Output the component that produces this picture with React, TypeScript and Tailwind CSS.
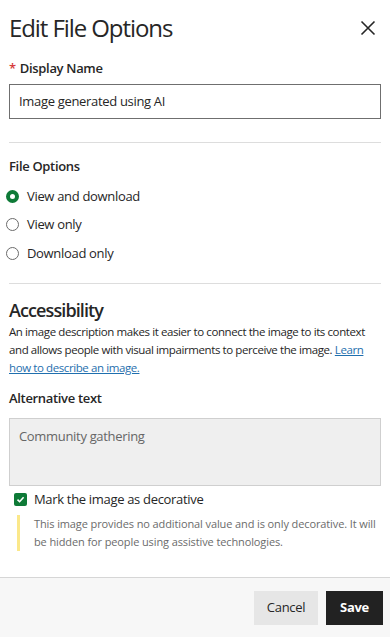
import React from 'react';

const options = ['View and download', 'View only', 'Download only'];

export default function App() {
  return (
    <div
      className="w-[390px] h-[637px] bg-white flex flex-col text-[#262626] tracking-[-0.02em]"
      style={{ fontFamily: '"Open Sans", "Noto Sans", sans-serif' }}
    >
      <div className="flex-1 px-[9px]">
        {/* header */}
        <div className="h-[56px] flex items-center justify-between">
          <h1 className="text-[24px] leading-[32px] font-normal tracking-[-0.045em]">Edit File Options</h1>
          <button className="w-[20px] h-[20px] mr-[3px] flex items-center justify-center" aria-label="Close">
            <svg width="16" height="16" viewBox="0 0 16 16">
              <path d="M1.5 1.5 L14.5 14.5 M14.5 1.5 L1.5 14.5" stroke="#262626" strokeWidth="1.6" fill="none" />
            </svg>
          </button>
        </div>

        <label className="block mt-[3px] text-[13px] leading-[18px] font-semibold tracking-[-0.025em]">
          <span className="text-[#d63a3a] mr-[4px]">*</span>Display Name
        </label>
        <div className="mt-[7px] h-[35px] border border-[#6f6f6f] flex items-center pl-[9px] text-[13px]">
          Image generated using AI
        </div>

        <div className="mt-[23px] h-px bg-[#dddddd]" />

        <div className="mt-[14px] text-[13px] leading-[18px] font-semibold tracking-[-0.025em]">File Options</div>
        <div className="mt-[7px] flex flex-col -ml-[3px]">
          {options.map((o, i) => (
            <div key={o} className="h-[28.5px] flex items-center gap-[8px] text-[13px]">
              {i === 0 ? (
                <span className="w-[13px] h-[13px] rounded-full border-[4px] border-[#0e7a37] bg-white" />
              ) : (
                <span className="w-[13px] h-[13px] rounded-full border border-[#6b6b6b] bg-white" />
              )}
              <span>{o}</span>
            </div>
          ))}
        </div>

        <div className="mt-[15px] h-px bg-[#dddddd]" />

        <h2 className="mt-[15px] text-[18px] leading-[22px] font-semibold tracking-[-0.05em]">Accessibility</h2>
        <p className="mt-[2px] text-[11.5px] leading-[18px] tracking-[-0.035em]">
          An image description makes it easier to connect the image to its context and allows people with visual
          impairments to perceive the image.{' '}
          <a className="text-[#1f6fae] underline">Learn how to describe an image.</a>
        </p>

        <div className="mt-[12px] text-[13px] leading-[18px] font-semibold tracking-[-0.025em]">Alternative text</div>
        <div className="mt-[11px] h-[68px] bg-[#efefef] border border-[#cfcfcf] pl-[9px] pt-[8px] text-[13px] leading-[18px] text-[#666666]">
          Community gathering
        </div>

        <div className="mt-[5px] h-[18px] flex items-center pl-[5px] gap-[7px] text-[13px]">
          <span className="w-[13px] h-[13px] rounded-[2px] bg-[#0e7a37] flex items-center justify-center">
            <svg width="9" height="9" viewBox="0 0 9 9">
              <path d="M1.5 4.6 L3.6 6.7 L7.6 2.2" stroke="white" strokeWidth="1.6" fill="none" />
            </svg>
          </span>
          <span>Mark the image as decorative</span>
        </div>

        <div className="mt-[6px] ml-[8px] border-l-[3px] border-[#fbe88a] pl-[14px] text-[11px] leading-[18px] text-[#6b6b6b] tracking-[-0.01em]">
          This image provides no additional value and is only decorative. It will be hidden for people using
          assistive technologies.
        </div>
      </div>

      {/* footer */}
      <div className="h-[60px] border-t border-[#d6d6d6] bg-[#f7f7f7] flex items-center justify-end gap-[8px] pr-[7px]">
        <button className="h-[34px] w-[64px] bg-[#e6e6e6] text-[13px] text-[#262626]">Cancel</button>
        <button className="h-[34px] w-[57px] bg-[#222222] text-[13px] font-bold text-white">Save</button>
      </div>
    </div>
  );
}
